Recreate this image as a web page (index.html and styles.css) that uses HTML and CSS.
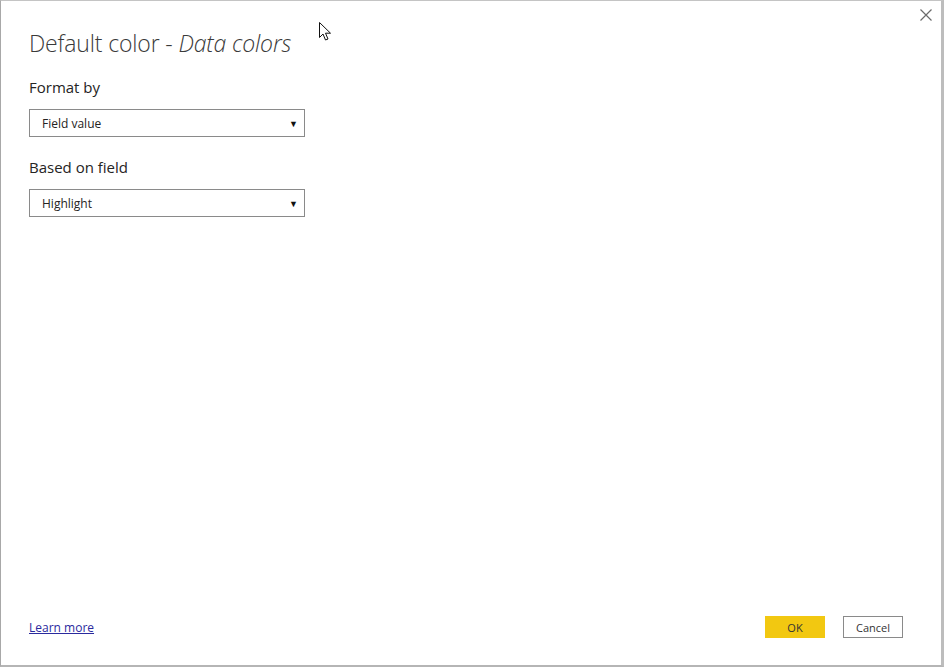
FILE: index.html
```html
<!DOCTYPE html>
<html>
<head>
<meta charset="utf-8">
<link rel="stylesheet" href="styles.css">
</head>
<body>
<div class="dialog">
  <button class="close" aria-label="Close">
    <svg width="12" height="12" viewBox="0 0 12 12"><path d="M0.5 0.5 L11.5 11.5 M11.5 0.5 L0.5 11.5" stroke="#6b6b6b" stroke-width="1.2" fill="none"/></svg>
  </button>
  <svg class="cursor" width="14" height="20" viewBox="0 0 14 20"><path d="M0.5 0.5 L0.5 15.5 L4 12 L6.5 18 L9 17 L6.5 11.2 L11.5 11.2 Z" fill="#fff" stroke="#111" stroke-width="1"/></svg>
  <div class="content">
    <h1 class="title">Default color - <em>Data colors</em></h1>
    <div class="field">
      <div class="label">Format by</div>
      <div class="select"><span>Field value</span><span class="arrow">▼</span></div>
    </div>
    <div class="field">
      <div class="label">Based on field</div>
      <div class="select"><span>Highlight</span><span class="arrow">▼</span></div>
    </div>
  </div>
  <div class="footer">
    <a class="learn" href="#">Learn more</a>
    <div class="buttons">
      <button class="btn ok">OK</button>
      <button class="btn cancel">Cancel</button>
    </div>
  </div>
</div>
</body>
</html>
```
FILE: styles.css
```css
html, body {
  margin: 0;
  padding: 0;
  background: #fff;
}
body {
  font-family: "Open Sans", "Noto Sans", sans-serif;
  color: #252423;
}
.dialog {
  position: relative;
  box-sizing: border-box;
  width: 944px;
  height: 667px;
  border-left: 1px solid #a8a8a8;
  border-top: 1px solid #c4c4c4;
  border-right: 3px solid #bdbdbd;
  border-bottom: 2px solid #b5b5b5;
  display: flex;
  flex-direction: column;
  justify-content: space-between;
  padding: 0 38px 27px 28px;
}
.close {
  position: absolute;
  top: 7px;
  right: 8px;
  width: 14px;
  height: 14px;
  padding: 1px;
  border: 0;
  background: transparent;
}
.close svg { display: block; }
.cursor {
  position: absolute;
  left: 318px;
  top: 21px;
}
.title {
  margin: 27px 0 0 0;
  font-size: 23px;
  font-weight: 300;
  color: #3a3a3a;
  line-height: 30px;
  letter-spacing: -0.15px;
}
.title em {
  font-style: italic;
}
.field {
  margin-top: 18px;
}
.field + .field {
  margin-top: 19px;
}
.label {
  font-size: 15px;
  line-height: 22px;
  color: #252423;
  margin-bottom: 11px;
}
.select {
  box-sizing: border-box;
  width: 276px;
  height: 28px;
  border: 1px solid #8a8a8a;
  display: flex;
  align-items: center;
  justify-content: space-between;
  padding: 0 6px 0 12px;
  font-size: 12px;
  color: #252423;
}
.arrow {
  font-size: 9px;
  color: #111;
}
.footer {
  display: flex;
  align-items: center;
  justify-content: space-between;
}
.learn {
  font-size: 12px;
  color: #2a2a9e;
  text-decoration: underline;
}
.buttons {
  display: flex;
  gap: 18px;
}
.btn {
  box-sizing: border-box;
  width: 60px;
  height: 22px;
  font-family: "Open Sans", "Noto Sans", sans-serif;
  font-size: 11px;
  color: #333;
  padding: 0;
  border-radius: 0;
}
.ok {
  background: #f2c811;
  border: 1px solid #f2c811;
}
.cancel {
  background: #fff;
  border: 1px solid #8a8a8a;
}
```
